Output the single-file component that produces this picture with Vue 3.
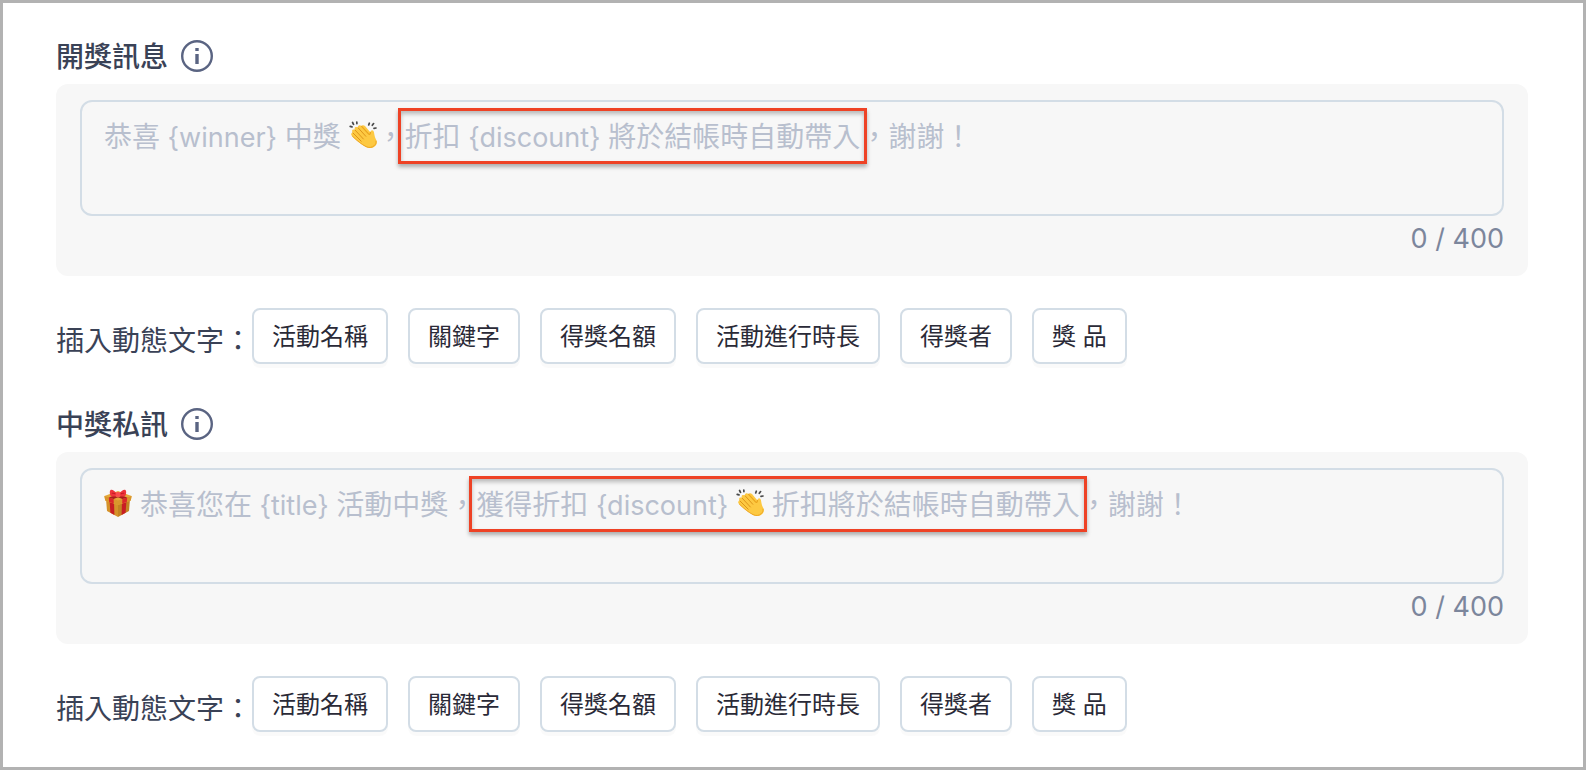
<script setup>
import { ref } from 'vue';

const MAX_LENGTH = 400;

const tags = ['活動名稱', '關鍵字', '得獎名額', '活動進行時長', '得獎者', '獎 品'];

const sections = ref([
  {
    id: 'draw_message',
    title: '開獎訊息',
    value: '',
    before: [
      { text: '恭喜' },
      { token: ' {winner} ' },
      { text: '中獎 ' },
      { icon: 'clap' },
      { text: '，' }
    ],
    marked: [{ text: '折扣' }, { token: ' {discount} ' }, { text: '將於結帳時自動帶入' }],
    after: '，謝謝！'
  },
  {
    id: 'winner_message',
    title: '中獎私訊',
    value: '',
    before: [
      { icon: 'gift' },
      { text: ' 恭喜您在' },
      { token: ' {title} ' },
      { text: '活動中獎，' }
    ],
    marked: [
      { text: '獲得折扣' },
      { token: ' {discount} ' },
      { icon: 'clap' },
      { text: ' 折扣將於結帳時自動帶入' }
    ],
    after: '，謝謝！'
  }
]);

function insertTag(section, tag) {
  const next = section.value + `{${tag}}`;
  if (next.length <= MAX_LENGTH) {
    section.value = next;
  }
}
</script>

<template>
  <svg class="sprite" aria-hidden="true">
    <symbol id="clap" viewBox="0 0 28 28">
      <path
        d="M1.2 5.4l1.8.5M3.6 1.5l.9 1.8M7.8 1l.1 1.7M20.3 2.2l-.6 1.8M24.6 2.6l-1.3 1.7M27 7l-2 .4"
        stroke="#4a4a4a"
        stroke-width="1.7"
        stroke-linecap="round"
      />
      <path
        d="M2.4 12.400c.4-.5 1-.6 1.500-.5-1.300-1.700-.9-3 .1-3.400.7-.3 1.400 0 2 .5-.7-1.500-.3-2.500.6-2.900 1-.4 1.700 0 2.500.7-.5-1.300-.1-2.100.8-2.400 1-.4 1.900.1 2.700.9.2-1.200 2.200-1.500 3.400-.2l5.500 6.300c.2-1.500 1-2.300 2.100-2 1 .3 1.300 1.200 1.500 2.500.4 2.500.9 4.500 1.900 6.500 1.500 3 .8 5.500-1.400 7.100-2.600 1.900-5.600 2-8.500.4C13 23.600 7 19 3 14.900c-.8-.8-1.200-1.700-.6-2.500z"
        fill="#fdc942"
      />
      <path
        d="M12.600 5.300l6.900 7.600c.9 1 1.800.6 2-1.500"
        fill="none"
        stroke="#eba51e"
        stroke-width="1.2"
        stroke-linecap="round"
      />
      <path
        d="M3.900 11.900l8.300 8.300M6 9l8.400 9M9.100 6.800l7.700 8.500"
        fill="none"
        stroke="#d98f16"
        stroke-width=".9"
        stroke-linecap="round"
      />
      <path
        d="M3.500 15.300c4.300 4.300 9.300 8.200 13.500 10.300 3 1.500 6 1 8.200-.9 1.400-1.200 2.100-2.700 1.900-4.600"
        fill="none"
        stroke="#eda522"
        stroke-linecap="round"
      />
    </symbol>
    <symbol id="gift" viewBox="0 0 28 28">
      <path d="M2 10l12 4v14L3 22z" fill="#d5922a" />
      <path d="M26 10l-12 4v14l11-6z" fill="#c48322" />
      <path d="M5.500 11l4.500 1.500.4 13.500-4-2.200zM22.500 11L18 12.500 17.600 26l4-2.200z" fill="#c81e24" />
      <path d="M.4 7L14 2l13.600 5-.8 4.500L14 16 1.200 11.500z" fill="#e6a83a" />
      <path d="M.4 7L14 11.500 27.600 7l-.8 4.500L14 16 1.200 11.500z" fill="#d9962c" />
      <path d="M4.800 8.400l4.800 1.600.2 4.500L5.200 13zM23.200 8.400L18.400 10l-.2 4.500 4.600-1.500z" fill="#dc262b" />
      <path d="M4.800 8.400L18 3.500l4.200 1.500L9.600 10zM23.200 8.400L10 3.500 5.800 5l12.600 5z" fill="#a91b1d" />
      <path
        d="M13.500 5.500C11 1.800 8 .1 6.600.9 5.200 1.900 5.900 5.300 6.800 7c2.500 1 5 .8 6.700-1.500zM14.500 5.500C17 1.800 20 .1 21.400.9c1.400 1 .7 4.400-.2 6.100-2.500 1-5 .8-6.700-1.500z"
        fill="#ee343b"
      />
      <path
        d="M12.300 5.400C10.500 4.500 9 4 7.800 4.300M15.700 5.400c1.800-.9 3.300-1.400 4.500-1.100"
        fill="none"
        stroke="#b8151c"
        stroke-width=".9"
      />
      <rect x="11.500" y="3" width="5" height="5" rx="2" fill="#fb4b4e" />
    </symbol>
  </svg>

  <main class="page">
    <section v-for="section in sections" :key="section.id" class="section">
      <div class="section-title">
        <label :for="section.id">{{ section.title }}</label>
        <svg class="info" viewBox="0 0 32 32" role="img" aria-label="info">
          <circle cx="16" cy="16" r="14.800" fill="none" stroke="currentColor" stroke-width="2.400" />
          <path d="M14.300 8h3.400v3h-3.400zM14.300 14h3.400v10h-3.400z" fill="currentColor" />
        </svg>
      </div>

      <div class="panel">
        <div class="field">
          <textarea :id="section.id" v-model="section.value" :maxlength="MAX_LENGTH" rows="2"></textarea>
          <div v-if="!section.value" class="hint">
            <template v-for="(part, i) in section.before" :key="i">
              <svg v-if="part.icon" class="emoji"><use :href="'#' + part.icon" /></svg>
              <span v-else-if="part.token" class="token">{{ part.token }}</span>
              <span v-else>{{ part.text }}</span>
            </template>
            <span class="marked">
              <template v-for="(part, i) in section.marked" :key="i">
                <svg v-if="part.icon" class="emoji"><use :href="'#' + part.icon" /></svg>
                <span v-else-if="part.token" class="token">{{ part.token }}</span>
                <span v-else>{{ part.text }}</span>
              </template>
            </span>
            <span>{{ section.after }}</span>
          </div>
        </div>
        <div class="counter">{{ section.value.length }} / {{ MAX_LENGTH }}</div>
      </div>

      <div class="tags">
        <span class="tags-label">插入動態文字：</span>
        <div class="tags-list">
          <button v-for="tag in tags" :key="tag" type="button" class="tag" @click="insertTag(section, tag)">
            {{ tag }}
          </button>
        </div>
      </div>
    </section>
  </main>
</template>

<style>
body {
  margin: 0;
  background: #fff;
}
</style>

<style scoped>
.sprite {
  position: absolute;
  width: 0;
  height: 0;
}
.page {
  box-sizing: border-box;
  min-height: 100vh;
  padding: 37px 55px 32px 53px;
  border: 3px solid #b2b2b2;
  font-family: Inter, "Noto Sans CJK TC", sans-serif;
  font-size: 28px;
  color: #3a4256;
}
.section + .section {
  margin-top: 44px;
}
.section-title {
  display: flex;
  align-items: center;
  gap: 13px;
  margin-bottom: 12px;
  font-weight: 500;
}
.section-title label {
  padding-top: 2px;
  line-height: 30px;
}
.info {
  width: 32px;
  height: 32px;
  color: #5a6482;
}
.panel {
  padding: 16px 24px 14px;
  border-radius: 12px;
  background: #f7f7f7;
}
.field {
  position: relative;
}
.field textarea {
  display: block;
  box-sizing: border-box;
  width: 100%;
  height: 116px;
  padding: 13px 22px;
  border: 2px solid #d3dde6;
  border-radius: 12px;
  outline: none;
  resize: none;
  background: transparent;
  font: inherit;
  line-height: 44px;
  color: inherit;
}
.field textarea:focus {
  border-color: #8fa3bd;
}
/* placeholder layer, it carries the icons and the marked phrase */
.hint {
  position: absolute;
  inset: 0;
  display: flex;
  flex-wrap: wrap;
  align-content: flex-start;
  align-items: baseline;
  padding: 15px 24px;
  line-height: 44px;
  white-space: pre;
  color: #b8bfce;
  pointer-events: none;
}
.token {
  font-size: 27px;
}
.marked {
  position: relative;
  display: flex;
  align-items: baseline;
}
.marked::after {
  content: "";
  position: absolute;
  inset: -7px -7px -4px;
  border: 3px solid #ee4225;
  box-shadow: 0 3px 4px rgba(0, 0, 0, 0.3), inset 0 3px 4px rgba(0, 0, 0, 0.25);
}
.emoji {
  align-self: flex-start;
  width: 28px;
  height: 28px;
  margin-top: 6px;
}
.counter {
  font-size: 27px;
  line-height: 46px;
  text-align: right;
  color: #7c869c;
}
.tags {
  display: flex;
  align-items: flex-start;
  margin-top: 32px;
}
.tags-label {
  flex: none;
  padding-top: 13px;
  line-height: 40px;
}
.tags-list {
  display: flex;
  flex-wrap: wrap;
  gap: 20px;
}
.tag {
  height: 56px;
  padding: 2px 18px 0;
  border: 2px solid #d3dde6;
  border-radius: 8px;
  background: #fff;
  box-shadow: 0 4px 0 rgba(0, 0, 0, 0.02);
  font-family: inherit;
  font-size: 24px;
  line-height: 32px;
  color: #2a2a37;
  cursor: pointer;
}
.tag:hover {
  border-color: #8fa3bd;
}
</style>
